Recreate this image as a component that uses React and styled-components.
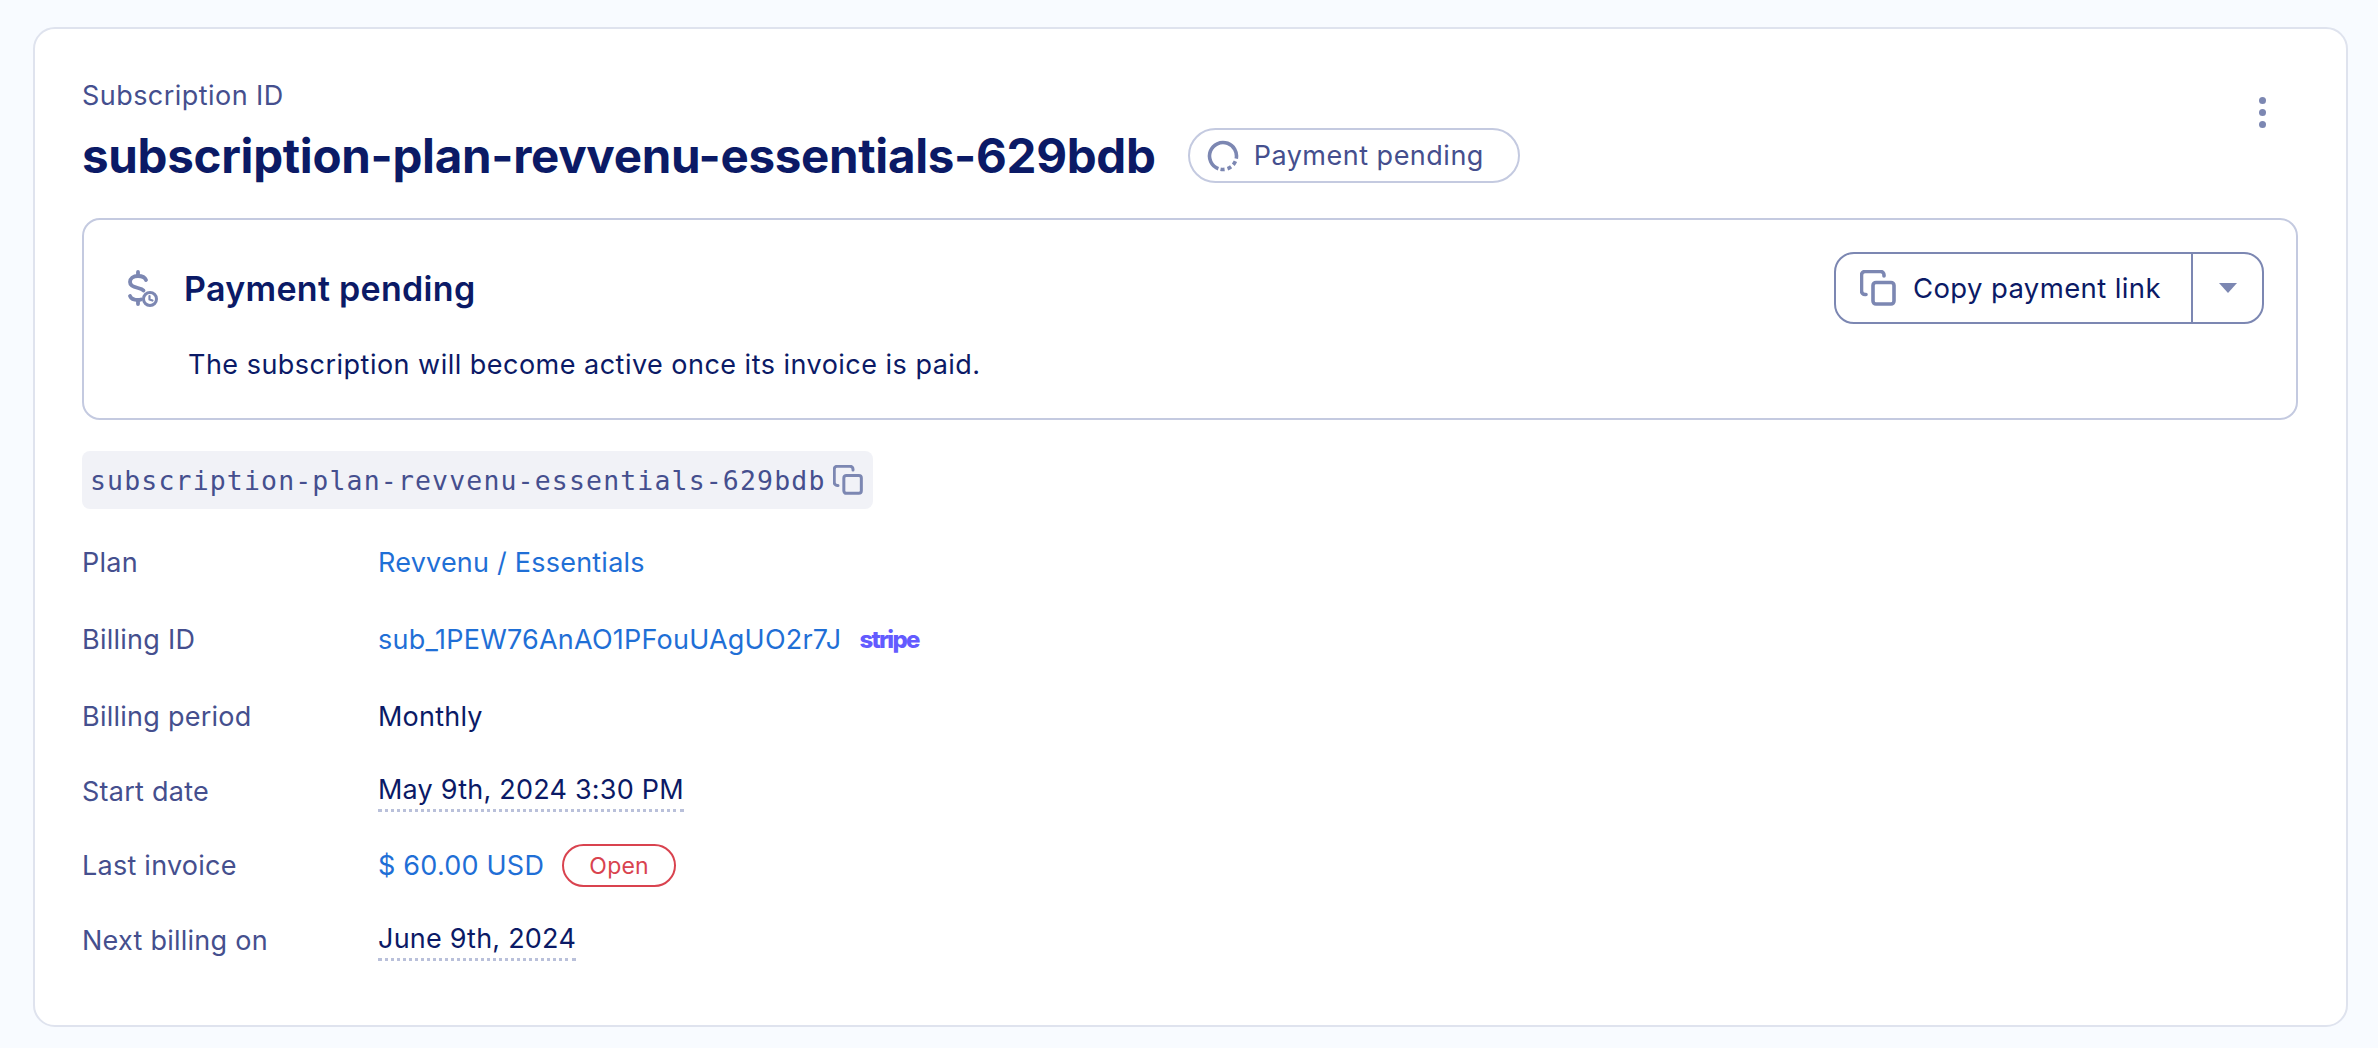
import React from 'react';
import styled, { createGlobalStyle } from 'styled-components';

const navy = '#0b1a66';
const slate = '#454f8e';
const iconColor = '#7c87b2';
const link = '#1f6fd6';
const sans = '"Inter", "Noto Sans", sans-serif';

const Global = createGlobalStyle`
  html, body { margin: 0; padding: 0; background: #f8fbff; }
  body { font-family: ${sans}; color: ${navy}; }
`;

const Page = styled.div`
  height: 1048px;
  box-sizing: border-box;
  padding: 27px 30px 21px 33px;
`;

const Card = styled.section`
  box-sizing: border-box;
  height: 1000px;
  background: #fff;
  border: 2px solid #dfe3ee;
  border-radius: 22px;
  padding: 0 48px 0 47px;
`;

const Header = styled.header`
  display: flex;
  justify-content: space-between;
  height: 189px;
`;

const Eyebrow = styled.div`
  font-size: 27px;
  line-height: 32px;
  color: ${slate};
  padding-top: 51px;
  letter-spacing: 0.45px;
`;

const TitleRow = styled.div`
  display: flex;
  align-items: center;
  gap: 32px;
  margin-top: 16px;
`;

const Title = styled.h1`
  margin: 0;
  font-size: 47.5px;
  line-height: 55px;
  font-weight: 700;
  color: ${navy};
  letter-spacing: -0.3px;
`;

const StatusPill = styled.div`
  box-sizing: border-box;
  display: flex;
  align-items: center;
  gap: 15px;
  width: 332px;
  height: 55px;
  padding-left: 17px;
  border: 2px solid #c4cae0;
  border-radius: 28px;
  font-size: 27px;
  letter-spacing: 0.5px;
  color: ${slate};
`;

const Kebab = styled.button`
  display: flex;
  flex-direction: column;
  gap: 5px;
  margin: 68px 32px 0 0;
  padding: 0;
  height: 32px;
  background: none;
  border: 0;
`;

const Dot = styled.span`
  width: 7px;
  height: 7px;
  border-radius: 50%;
  background: ${iconColor};
`;

const Notice = styled.div`
  box-sizing: border-box;
  height: 202px;
  border: 2px solid #c4cae0;
  border-radius: 18px;
  padding: 32px 32px 0 43px;
`;

const NoticeTop = styled.div`
  display: flex;
  justify-content: space-between;
  align-items: center;
`;

const NoticeHeading = styled.div`
  display: flex;
  align-items: center;
  gap: 25px;
`;

const NoticeTitle = styled.h2`
  margin: 0;
  font-size: 34px;
  font-weight: 600;
  color: ${navy};
  letter-spacing: 0.3px;
`;

const NoticeText = styled.p`
  margin: 25px 0 0 61px;
  font-size: 27px;
  line-height: 32px;
  letter-spacing: 0.48px;
  color: ${navy};
`;

const SplitButton = styled.div`
  box-sizing: border-box;
  display: flex;
  width: 430px;
  height: 72px;
  border: 2px solid ${iconColor};
  border-radius: 20px;
`;

const ButtonMain = styled.button`
  display: flex;
  align-items: center;
  gap: 17px;
  width: 357px;
  padding: 0 0 0 24px;
  background: none;
  border: 0;
  border-right: 2px solid ${iconColor};
  font-family: ${sans};
  font-size: 27.5px;
  letter-spacing: 0.38px;
  color: ${navy};
`;

const ButtonCaret = styled.button`
  flex: 1;
  display: flex;
  align-items: center;
  justify-content: center;
  background: none;
  border: 0;
  padding: 0;
`;

const Caret = styled.span`
  width: 0;
  height: 0;
  border-left: 9px solid transparent;
  border-right: 9px solid transparent;
  border-top: 10px solid ${iconColor};
`;

const CodeChip = styled.div`
  box-sizing: border-box;
  display: inline-flex;
  align-items: center;
  gap: 7px;
  width: 791px;
  height: 58px;
  margin-top: 31px;
  padding-left: 8px;
  background: #f1f2f7;
  border-radius: 8px;
  font-family: "DejaVu Sans Mono", "Liberation Mono", monospace;
  font-size: 26.5px;
  letter-spacing: 1.15px;
  color: ${slate};
`;

const Rows = styled.div`
  margin-top: 15px;
`;

const Row = styled.div`
  display: grid;
  grid-template-columns: 296px 1fr;
  align-items: center;
  height: ${props => props.$h}px;
`;

const Label = styled.div`
  font-size: 27px;
  letter-spacing: 0.25px;
  color: ${slate};
`;

const Value = styled.div`
  display: flex;
  align-items: center;
  gap: 18px;
  font-size: 27px;
  letter-spacing: 0.22px;
  color: ${props => (props.$link ? link : navy)};
`;

const Dotted = styled.span`
  border-bottom: 3px dotted #b9c0da;
  padding-bottom: 4px;
  margin-top: 4px;
  line-height: 30px;
`;

const Stripe = styled.span`
  font-size: 24px;
  font-weight: 800;
  letter-spacing: -1.7px;
  color: #635bff;
`;

const OpenTag = styled.span`
  box-sizing: border-box;
  display: flex;
  align-items: center;
  justify-content: center;
  width: 114px;
  height: 43px;
  border: 2px solid #d9434f;
  border-radius: 22px;
  font-size: 23px;
  letter-spacing: 0.2px;
  color: #d9434f;
`;

function CopyIcon({ size }) {
  return (
    <svg width={size} height={size} viewBox="0 0 36 36" fill="none" stroke={iconColor} strokeWidth="3.6" strokeLinecap="round" strokeLinejoin="round">
      <path d="M24 6V5a3.500 3.500 0 0 0-3.500-3.500H5A3.500 3.500 0 0 0 1.500 5v16A3.500 3.500 0 0 0 5 24.500h1" />
      <rect x="13" y="12.500" width="21" height="21.500" rx="3" />
    </svg>
  );
}

function Spinner() {
  return (
    <svg width="32" height="32" viewBox="0 0 32 32" fill="none" stroke={iconColor} strokeWidth="3.600">
      <circle cx="16" cy="16" r="13.500" strokeDasharray="61 3 4 3 4 3 4 3" transform="rotate(110 16 16)" />
    </svg>
  );
}

function DollarClock() {
  return (
    <svg width="32" height="38" viewBox="0 0 32 38" fill="none" stroke={iconColor} strokeWidth="3.800" strokeLinecap="round" strokeLinejoin="round">
      <path d="M11 3v4M11 31v4" />
      <path d="M19 11c-1-2.500-4-4-8-4-5 0-8 2.500-8 6 0 3.500 3.500 5 8 6 2.500.6 4.500 1.300 5.500 2.500M14 30.500c-1 .4-2 .5-3 .5-4 0-7-1.500-8-4" />
      <circle cx="23" cy="30" r="6.500" strokeWidth="3" />
      <path d="M22.500 27v3.500l3 1" strokeWidth="2.200" />
    </svg>
  );
}

export default function App() {
  return (
    <Page>
      <Global />
      <Card>
        <Header>
          <div>
            <Eyebrow>Subscription ID</Eyebrow>
            <TitleRow>
              <Title>subscription-plan-revvenu-essentials-629bdb</Title>
              <StatusPill>
                <Spinner />
                Payment pending
              </StatusPill>
            </TitleRow>
          </div>
          <Kebab aria-label="More">
            <Dot />
            <Dot />
            <Dot />
          </Kebab>
        </Header>

        <Notice>
          <NoticeTop>
            <NoticeHeading>
              <DollarClock />
              <NoticeTitle>Payment pending</NoticeTitle>
            </NoticeHeading>
            <SplitButton>
              <ButtonMain>
                <CopyIcon size={36} />
                Copy payment link
              </ButtonMain>
              <ButtonCaret aria-label="More options">
                <Caret />
              </ButtonCaret>
            </SplitButton>
          </NoticeTop>
          <NoticeText>The subscription will become active once its invoice is paid.</NoticeText>
        </Notice>

        <CodeChip>
          subscription-plan-revvenu-essentials-629bdb
          <CopyIcon size={30} />
        </CodeChip>

        <Rows>
          <Row $h={77}>
            <Label>Plan</Label>
            <Value $link>Revvenu / Essentials</Value>
          </Row>
          <Row $h={77}>
            <Label>Billing ID</Label>
            <Value $link>
              sub_1PEW76AnAO1PFouUAgUO2r7J
              <Stripe>stripe</Stripe>
            </Value>
          </Row>
          <Row $h={76}>
            <Label>Billing period</Label>
            <Value>Monthly</Value>
          </Row>
          <Row $h={74}>
            <Label>Start date</Label>
            <Value><Dotted>May 9th, 2024 3:30 PM</Dotted></Value>
          </Row>
          <Row $h={75}>
            <Label>Last invoice</Label>
            <Value $link>
              $ 60.00 USD
              <OpenTag>Open</OpenTag>
            </Value>
          </Row>
          <Row $h={75}>
            <Label>Next billing on</Label>
            <Value><Dotted>June 9th, 2024</Dotted></Value>
          </Row>
        </Rows>
      </Card>
    </Page>
  );
}
